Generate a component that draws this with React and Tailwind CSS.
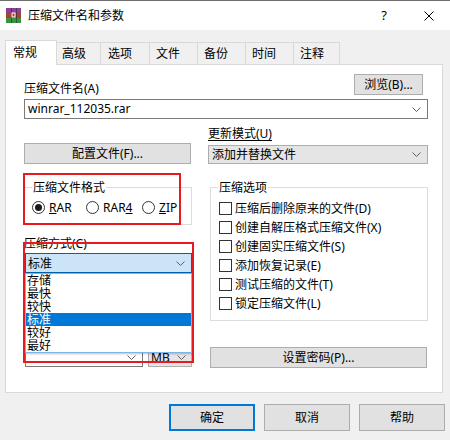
import React from "react";

const font = "font-['Noto_Sans','Noto_Sans_CJK_SC',sans-serif]";

function Chevron() {
  return (
    <svg width="9" height="5" viewBox="0 0 9 5" className="shrink-0">
      <path d="M0.5 0.5 L4.5 4.5 L8.5 0.5" fill="none" stroke="#606060" strokeWidth="1" />
    </svg>
  );
}

function RarIcon() {
  return (
    <svg width="15" height="15" viewBox="0 0 15 15" className="shrink-0">
      <rect x="0" y="0" width="15" height="5" fill="#8e3f96" />
      <rect x="0" y="5" width="15" height="5" fill="#3d5ca8" />
      <rect x="0" y="10" width="15" height="5" fill="#3f9142" />
      <rect x="0" y="6" width="15" height="3" fill="#a5452b" />
      <rect x="5" y="0" width="1" height="15" fill="#2b2b2b" opacity="0.6" />
      <rect x="10" y="0" width="1" height="15" fill="#2b2b2b" opacity="0.6" />
      <rect x="5.5" y="4.5" width="4" height="5" fill="#ffffff" />
      <rect x="6.5" y="5.5" width="2" height="3" fill="#c0392b" />
    </svg>
  );
}

function Radio({ checked, children, className = "" }) {
  return (
    <div className={`flex items-center h-[13px] ${className}`}>
      <span className="w-[13px] h-[13px] rounded-full border border-[#333] bg-white flex items-center justify-center shrink-0">
        {checked && <span className="w-[7px] h-[7px] rounded-full bg-[#1a1a1a]" />}
      </span>
      <span className="ml-[4px] leading-[13px]">{children}</span>
    </div>
  );
}

function Check({ children }) {
  return (
    <div className="flex items-center h-[19px]">
      <span className="ml-[1px] w-[13px] h-[13px] border border-[#333] bg-white shrink-0" />
      <span className="ml-[3px] leading-[13px] whitespace-nowrap">{children}</span>
    </div>
  );
}

const tabs = [
  { name: "高级", w: "w-[44px]", pl: "pl-[5px]" },
  { name: "选项", w: "w-[49px]", pl: "pl-[7px]" },
  { name: "文件", w: "w-[48px]", pl: "pl-[6px]" },
  { name: "备份", w: "w-[48px]", pl: "pl-[6px]" },
  { name: "时间", w: "w-[48px]", pl: "pl-[6px]" },
  { name: "注释", w: "w-[46px]", pl: "pl-[6px]" },
];

const methods = ["存储", "最快", "较快", "标准", "较好", "最好"];

const options = [
  "压缩后删除原来的文件(D)",
  "创建自解压格式压缩文件(X)",
  "创建固实压缩文件(S)",
  "添加恢复记录(E)",
  "测试压缩的文件(T)",
  "锁定压缩文件(L)",
];

export default function App() {
  return (
    <div className={`relative w-[450px] h-[440px] overflow-hidden bg-[#f0f0f0] border-t border-[#6e6e6e] text-[12px] text-black ${font}`}>
      {/* title bar */}
      <div className="h-[29px] bg-white flex items-center">
        <div className="ml-[6px]">
          <RarIcon />
        </div>
        <span className="ml-[7px] leading-[14px]">压缩文件名和参数</span>
        <div className="ml-auto flex items-center h-full">
          <div className="w-[46px] text-center text-[13px] leading-none">?</div>
          <div className="w-[43px] flex justify-center">
            <svg width="10" height="10" viewBox="0 0 10 10">
              <path d="M0.5 0.5 L9.5 9.5 M9.5 0.5 L0.5 9.5" stroke="#000" strokeWidth="1" />
            </svg>
          </div>
        </div>
      </div>

      {/* tabs */}
      <div className="pt-[10px] pl-[5px] flex items-end h-[34px]">
        <div className="relative z-10 -mb-[1px] h-[25px] w-[52px] pl-[7px] pt-[5px] bg-white border-x border-t border-[#d9d9d9] leading-[13px]">
          常规
        </div>
        {tabs.map((t) => (
          <div
            key={t.name}
            className={`h-[22px] ${t.w} ${t.pl} pt-[4px] border-t border-r border-[#d9d9d9] leading-[13px]`}
          >
            {t.name}
          </div>
        ))}
      </div>

      {/* panel */}
      <div className="ml-[5px] w-[438px] h-[329px] bg-white border border-[#d9d9d9] pl-[18px] pt-[9px]">
        {/* archive name */}
        <div className="w-[404px] flex items-end justify-between">
          <span className="leading-[14px] -mb-[1px]">压缩文件名(A)</span>
          <button className="mr-[5px] w-[69px] h-[21px] bg-[#e1e1e1] border border-[#adadad] leading-[13px]">
            浏览(B)...
          </button>
        </div>
        <div className="mt-[4px] w-[404px] h-[20px] border border-[#7a7a7a] flex items-center pl-[3px] pr-[6px]">
          <span className="flex-1 leading-[14px]">winrar_112035.rar</span>
          <Chevron />
        </div>

        {/* profiles + update mode */}
        <div className="mt-[8px] flex items-end">
          <button className="w-[167px] h-[21px] bg-[#e1e1e1] border border-[#adadad] leading-[13px]">
            配置文件(F)...
          </button>
          <div className="ml-[17px] w-[220px]">
            <div className="leading-[13px] underline underline-offset-[2px]">更新模式(U)</div>
            <div className="mt-[5px] h-[19px] bg-[#e5e5e5] border border-[#adadad] flex items-center pl-[3px] pr-[6px]">
              <span className="flex-1 leading-[13px]">添加并替换文件</span>
              <Chevron />
            </div>
          </div>
        </div>

        {/* groups */}
        <div className="mt-[17px] flex items-start">
          <div className="w-[168px]">
            <fieldset className="border border-[#dcdcdc] pl-[7px] pt-[7px] pb-[10px]">
              <legend className="px-[1px] leading-[13px]">压缩文件格式</legend>
              <div className="flex">
                <Radio checked className="w-[54px]">
                  <span className="underline underline-offset-[1px]">R</span>AR
                </Radio>
                <Radio className="w-[56px]">
                  RAR<span className="underline underline-offset-[1px]">4</span>
                </Radio>
                <Radio>
                  <span className="underline underline-offset-[1px]">Z</span>IP
                </Radio>
              </div>
            </fieldset>

            <div className="mt-[12px] leading-[13px]">压缩方式(C)</div>
            <div className="relative mt-[3px] ml-[1px] w-[167px]">
              <div className="h-[20px] bg-[#cce4f7] border border-[#0063b1] flex items-center pl-[2px] pr-[6px]">
                <span className="flex-1 leading-[13px]">标准</span>
                <Chevron />
              </div>
              <div className="absolute left-0 top-full z-10 w-full h-[80px] bg-white border border-[#7eb4ea] shadow-[1px_1px_2px_rgba(0,0,0,0.25)]">
                {methods.map((m) => (
                  <div
                    key={m}
                    className={`h-[13px] leading-[13px] pl-[1px] ${m === "标准" ? "bg-[#0078d7] text-white" : ""}`}
                  >
                    {m}
                  </div>
                ))}
              </div>
            </div>

            <div className="mt-[55px] leading-[13px]">字典大小(I)</div>
            <div className="mt-[6px] ml-[1px] flex gap-[5px]">
              <div className="w-[118px] h-[20px] border border-[#7a7a7a] bg-white flex items-center justify-end pr-[6px]">
                <Chevron />
              </div>
              <div className="w-[44px] h-[20px] border border-[#adadad] bg-[#e5e5e5] flex items-center pl-[2px] pr-[5px]">
                <span className="flex-1 leading-[13px]">MB</span>
                <Chevron />
              </div>
            </div>
          </div>

          <div className="ml-[18px] w-[218px]">
            <fieldset className="border border-[#dcdcdc] pl-[7px] pt-[5px] pb-[7px]">
              <legend className="px-[1px] leading-[13px]">压缩选项</legend>
              {options.map((o) => (
                <Check key={o}>{o}</Check>
              ))}
            </fieldset>
            <button className="mt-[26px] w-[217px] h-[21px] bg-[#e1e1e1] border border-[#adadad] leading-[13px]">
              设置密码(P)...
            </button>
          </div>
        </div>
      </div>

      {/* dialog buttons */}
      <div className="mt-[11px] pr-[5px] flex justify-end gap-[9px]">
        <button className="w-[86px] h-[27px] bg-[#e1e1e1] border-2 border-[#0078d7] leading-[13px]">确定</button>
        <button className="w-[86px] h-[27px] bg-[#e1e1e1] border border-[#adadad] leading-[13px]">取消</button>
        <button className="w-[86px] h-[27px] bg-[#e1e1e1] border border-[#adadad] leading-[13px]">帮助</button>
      </div>

      {/* red annotation boxes */}
      <div className="absolute z-20 left-[23px] top-[172px] w-[158px] h-[52px] border-2 border-[#e8191f]" />
      <div className="absolute z-20 left-[23px] top-[241px] w-[171px] h-[121px] border-2 border-[#e8191f]" />
    </div>
  );
}
